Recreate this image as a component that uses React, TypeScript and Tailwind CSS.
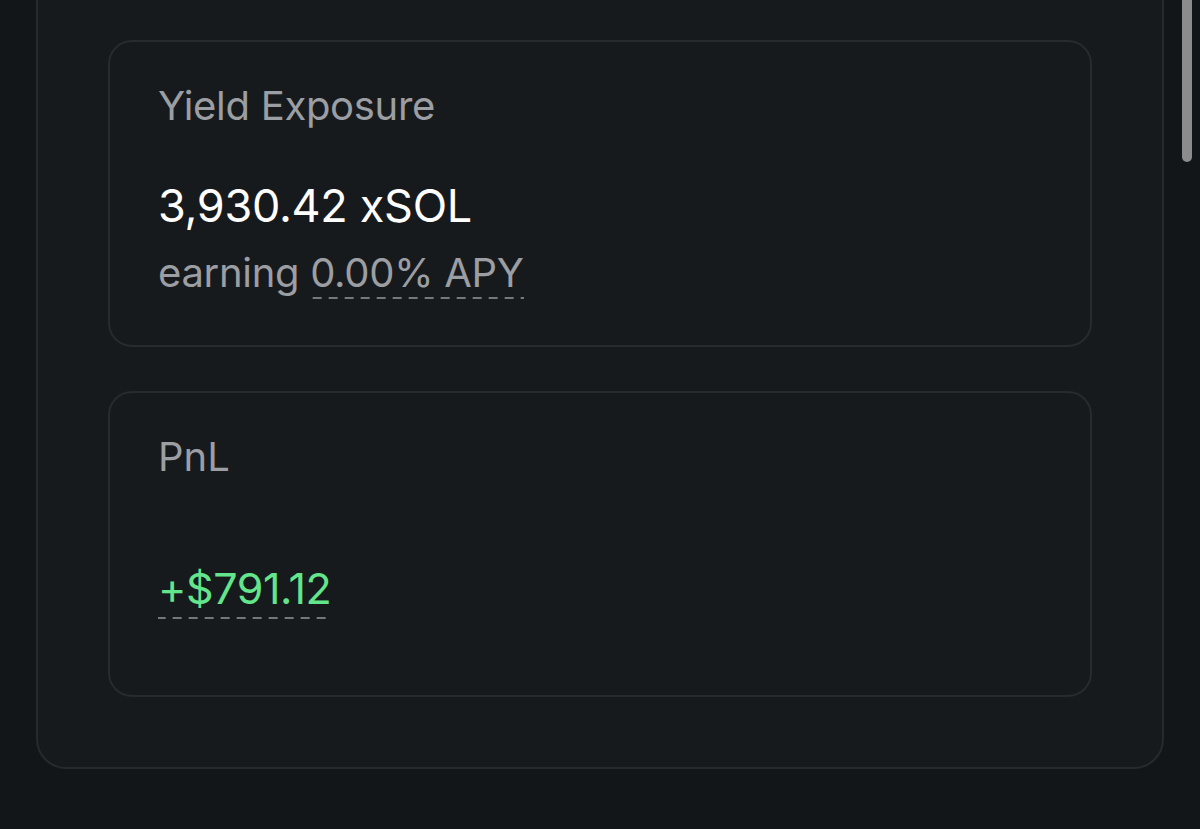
import React from "react";

function Dashed({ children, className }: { children: React.ReactNode; className?: string }) {
  return (
    <span
      className={`inline-block bg-[linear-gradient(to_right,#74777b_55%,transparent_55%)] bg-[length:16px_2px] bg-repeat-x bg-bottom ${className ?? ""}`}
    >
      {children}
    </span>
  );
}

export default function App() {
  return (
    <div
      className="relative w-full h-[829px] overflow-hidden bg-[#131619]"
      style={{ fontFamily: "Inter, 'Noto Sans', sans-serif" }}
    >
      <div className="mx-[36px] -mt-[32px] rounded-[30px] border-2 border-[#262a2e] bg-[#171a1d] px-[70px] pt-[70px] pb-[70px] flex flex-col gap-[44px]">
        <div className="h-[307px] rounded-[24px] border-2 border-[#272a2e] bg-[#171a1d] px-[48px] pt-[40px] flex flex-col">
          <div className="text-[40px] leading-[48px] text-[#9b9ea2] tracking-[-0.3px]">Yield Exposure</div>
          <div className="mt-[49px] text-[45px] leading-[54px] text-white tracking-[-0.3px]">3,930.42 xSOL</div>
          <div className="mt-[16px] h-[48px] text-[40px] leading-[48px] text-[#9b9ea2] tracking-[-0.3px]">
            earning <Dashed className="pb-[2px]">0.00% APY</Dashed>
          </div>
        </div>
        <div className="h-[306px] rounded-[24px] border-2 border-[#272a2e] bg-[#171a1d] px-[48px] pt-[40px] flex flex-col">
          <div className="text-[40px] leading-[48px] text-[#9b9ea2]">PnL</div>
          <div className="mt-[82px] h-[50px] text-[43px] leading-[50px] text-[#63e58b] tracking-[-0.4px]">
            <Dashed className="pb-[6px]">+$791.12</Dashed>
          </div>
        </div>
      </div>
      <div className="absolute right-[8px] top-0 w-[10px] h-[162px] rounded-b-full bg-[#8b8c8e]" />
    </div>
  );
}
